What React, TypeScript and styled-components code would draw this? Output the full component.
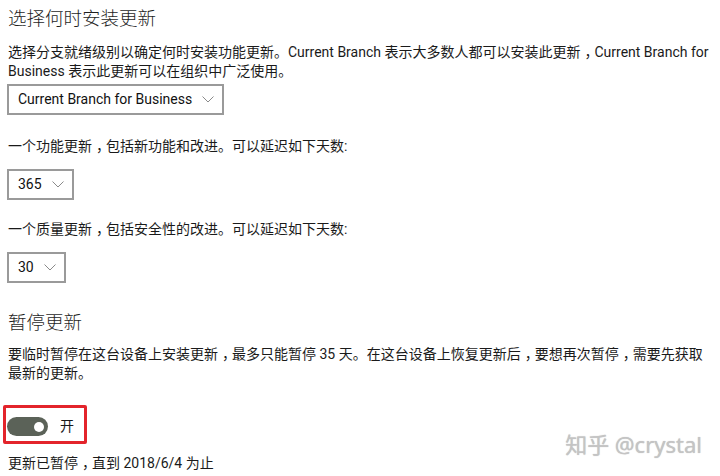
import React from 'react'
import styled, { createGlobalStyle } from 'styled-components'

const GlobalStyle = createGlobalStyle`
  html, body {
    margin: 0;
    padding: 0;
    background: #ffffff;
  }
`

const Page = styled.div`
  position: relative;
  width: 720px;
  height: 476px;
  box-sizing: border-box;
  padding: 4px 8px 0;
  overflow: hidden;
  background: #ffffff;
  color: #1a1a1a;
  font-family: Roboto, 'Noto Sans CJK SC', sans-serif;
  font-size: 14px;
  line-height: 19px;
`

const Heading = styled.h2<{ $top?: number }>`
  margin: ${({ $top }) => $top ?? 0}px 0 0;
  font-family: 'Noto Sans CJK SC', sans-serif;
  font-size: 18.5px;
  font-weight: 300;
  line-height: 26px;
  color: #1f1f1f;
`

const Text = styled.p<{ $top: number }>`
  margin: ${({ $top }) => $top}px 0 0;
  white-space: nowrap;
`

// Windows draws the full-width comma nearer the middle of its cell
const Comma = styled.span`
  padding-left: 4px;
  letter-spacing: -4px;
`

const Select = styled.div<{ $top: number }>`
  display: inline-flex;
  align-items: center;
  gap: 10px;
  height: 31px;
  box-sizing: border-box;
  margin-top: ${({ $top }) => $top}px;
  margin-left: -1px;
  padding: 0 8px 0 9px;
  border: 2px solid #9a9a9a;
  background: #ffffff;
  color: #111;
`

const Block = styled.div`
  display: block;
`

const ToggleFrame = styled.div`
  display: inline-flex;
  align-items: center;
  gap: 12px;
  margin: 22px 0 0 -5px;
  padding: 9px 10px 5px 1px;
  border: 3px solid #e3242b;
  border-radius: 2px;
`

const Toggle = styled.div`
  position: relative;
  width: 41px;
  height: 19px;
  border-radius: 10px;
  background: #5b6258;
`

const Knob = styled.span`
  position: absolute;
  top: 4.5px;
  right: 4px;
  width: 10px;
  height: 10px;
  border-radius: 50%;
  background: #ffffff;
`

const ToggleLabel = styled.span`
  font-size: 14px;
  line-height: 19px;
`

const Watermark = styled.div`
  position: absolute;
  right: 18px;
  bottom: 19px;
  font-family: 'Noto Sans', 'Noto Sans CJK SC', sans-serif;
  font-size: 22px;
  line-height: 26px;
  color: #c4c4c4;
  text-shadow: 0 0 1px rgba(0, 0, 0, 0.25);
`

const Chevron = () => (
  <svg width="12" height="7" viewBox="0 0 12 7" fill="none">
    <polyline points="0.5,0.5 6,6 11.5,0.5" stroke="#8a8a8a" strokeWidth="1" />
  </svg>
)

type DropdownProps = {
  value: string
  top: number
}

const Dropdown: React.FC<DropdownProps> = ({ value, top }) => (
  <Block>
    <Select $top={top}>
      <span>{value}</span>
      <Chevron />
    </Select>
  </Block>
)

const App: React.FC = () => {
  return (
    <Page>
      <GlobalStyle />
      <Heading>选择何时安装更新</Heading>
      <Text $top={13}>
        选择分支就绪级别以确定何时安装功能更新。Current Branch 表示大多数人都可以安装此更新<Comma>，</Comma>Current
        Branch for
        <br />
        Business 表示此更新可以在组织中广泛使用。
      </Text>
      <Dropdown value="Current Branch for Business" top={3} />

      <Text $top={22}>
        一个功能更新<Comma>，</Comma>包括新功能和改进。可以延迟如下天数:
      </Text>
      <Dropdown value="365" top={13} />

      <Text $top={20}>
        一个质量更新<Comma>，</Comma>包括安全性的改进。可以延迟如下天数:
      </Text>
      <Dropdown value="30" top={13} />

      <Heading $top={25}>暂停更新</Heading>
      <Text $top={11}>
        要临时暂停在这台设备上安装更新<Comma>，</Comma>最多只能暂停 35 天。在这台设备上恢复更新后<Comma>，</Comma>要想再次暂停
        <Comma>，</Comma>需要先获取
        <br />
        最新的更新。
      </Text>

      <ToggleFrame>
        <Toggle>
          <Knob />
        </Toggle>
        <ToggleLabel>开</ToggleLabel>
      </ToggleFrame>

      <Text $top={10}>
        更新已暂停<Comma>，</Comma>直到 2018/6/4 为止
      </Text>

      <Watermark>知乎 @crystal</Watermark>
    </Page>
  )
}

export default App
